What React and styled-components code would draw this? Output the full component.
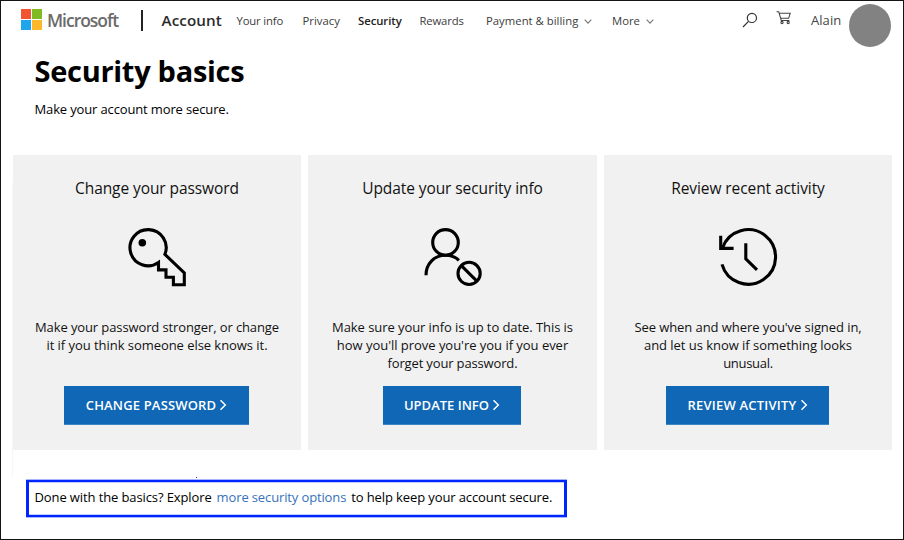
import React from 'react';
import styled, { createGlobalStyle } from 'styled-components';

const GlobalStyle = createGlobalStyle`
  *, *::before, *::after { box-sizing: border-box; }
  body { margin: 0; background: #fff; }
`;

const Page = styled.div`
  width: 904px;
  height: 540px;
  border: 1px solid #141414;
  background: #fff;
  color: #000;
  font-family: 'Open Sans', 'Noto Sans', sans-serif;
  overflow: hidden;
`;

const Header = styled.header`
  display: flex;
  align-items: center;
  height: 37px;
  padding-left: 20px;
`;

const LogoMark = styled.div`
  display: grid;
  grid-template-columns: 10px 10px;
  grid-template-rows: 10px 10px;
  gap: 1px;
  width: 21px;
`;

const LogoTile = styled.span`
  background: ${(p) => p.$color};
`;

const Wordmark = styled.span`
  width: 98.5px;
  padding-left: 5px;
  font-size: 17.5px;
  line-height: 24px;
  font-weight: 600;
  letter-spacing: -1.02px;
  color: #6b6b6b;
`;

const Divider = styled.span`
  width: 2px;
  height: 21px;
  margin-top: 2px;
  background: #222;
`;

const Product = styled.span`
  width: 94px;
  padding-left: 19px;
  margin-top: 1px;
  font-size: 15.2px;
  line-height: 22px;
  font-weight: 600;
  letter-spacing: 0.1px;
  color: #2b2b2b;
  white-space: nowrap;
`;

const Nav = styled.nav`
  display: flex;
  width: 505.5px;
  margin-top: 2px;
`;

const NavItem = styled.a`
  display: flex;
  align-items: center;
  gap: 6px;
  flex: none;
  width: ${(p) => p.$width}px;
  font-size: 11.3px;
  line-height: 18px;
  font-weight: ${(p) => (p.$active ? 600 : 400)};
  letter-spacing: ${(p) => p.$tracking}px;
  color: ${(p) => (p.$active ? '#222' : '#3c3c3c')};
  white-space: nowrap;
`;

const Tools = styled.div`
  display: flex;
  align-items: center;
`;

const CartWrap = styled.span`
  display: flex;
  margin: -3px 0 0 18px;
`;

const UserName = styled.span`
  width: 38px;
  margin-left: 19px;
  font-size: 13px;
  line-height: 20px;
  letter-spacing: 0.05px;
  color: #444;
`;

const Avatar = styled.span`
  width: 42px;
  height: 43px;
  margin-top: 12px;
  border-radius: 50%;
  background: #828282;
`;

const Intro = styled.section`
  height: 117px;
  padding: 12px 0 0 33.5px;
`;

const Title = styled.h1`
  margin: 0;
  font-size: 29px;
  line-height: 42px;
  font-weight: 700;
  letter-spacing: -0.29px;
`;

const Subtitle = styled.p`
  margin: 7px 0 0;
  font-size: 13px;
  line-height: 20px;
  letter-spacing: -0.14px;
`;

const Cards = styled.main`
  position: relative;
  display: grid;
  grid-template-columns: 288px 289px 288px;
  gap: 7px;
  height: 295px;
  padding-left: 12px;
`;

const EdgeLine = styled.span`
  position: absolute;
  left: 11px;
  top: 28px;
  width: 1px;
  height: 294px;
  background: #f7f7f7;
`;

const Card = styled.article`
  display: flex;
  flex-direction: column;
  align-items: center;
  padding-top: 21px;
  background: #f1f1f1;
`;

const CardTitle = styled.h2`
  margin: 0 0 27px;
  font-size: 15.5px;
  line-height: 24px;
  font-weight: 400;
  letter-spacing: -0.08px;
  color: #111;
`;

const CardIcon = styled.svg`
  display: block;
  flex: none;
  width: 60px;
  height: 60px;
  overflow: visible;
  fill: none;
  stroke: #000;
  stroke-width: 3.1;
`;

const Copy = styled.div`
  flex: none;
  height: 68px;
  margin-top: 31px;
  text-align: center;
`;

const CopyLine = styled.div`
  font-size: 13px;
  line-height: 18px;
  letter-spacing: ${(p) => p.$tracking}px;
  color: #111;
  white-space: nowrap;
`;

const Action = styled.button`
  display: flex;
  align-items: center;
  justify-content: center;
  gap: 3px;
  flex: none;
  width: ${(p) => p.$width}px;
  height: 39px;
  margin-right: 1px;
  padding: 0;
  border: 0;
  border-bottom: 1px solid #3d86c6;
  background: #0f67b5;
  color: #fff;
  font: 600 13px/20px 'Open Sans', 'Noto Sans', sans-serif;
  letter-spacing: ${(p) => p.$tracking}px;
  white-space: nowrap;
`;

const Footer = styled.footer`
  position: relative;
  padding: 30px 0 0 25px;
`;

const Speck = styled.span`
  position: absolute;
  left: 195px;
  top: 27px;
  width: 1px;
  height: 1px;
  background: #2a2ad8;
`;

const Callout = styled.div`
  display: flex;
  align-items: center;
  gap: 5px;
  width: 541px;
  height: 37px;
  padding: 0 0 3px 5.5px;
  border: solid #0026ff;
  border-width: 2px 3px;
  box-shadow: 0 -1px #a9b5ff, 0 1px #a9b5ff, inset 0 1px #c4ccff, inset 0 -1px #c4ccff;
  font-size: 13px;
  line-height: 20px;
  letter-spacing: -0.11px;
  white-space: nowrap;
`;

const CalloutLink = styled.a`
  color: #3672bb;
  letter-spacing: -0.13px;
`;

const Chevron = () => (
  <svg width="8" height="6" viewBox="0 0 8 6" fill="none" stroke="#777" strokeWidth="1.1">
    <path d="M.7 1.7 4 5.1 7.3 1.7" />
  </svg>
);

const ActionArrow = () => (
  <svg width="8" height="12" viewBox="0 0 8 12" fill="none" stroke="#fff" strokeWidth="1.5">
    <path d="M1.5 1.2 6.3 6 1.5 10.8" />
  </svg>
);

const SearchIcon = () => (
  <svg width="16" height="16" viewBox="0 0 16 16" fill="none" stroke="#333" strokeWidth="1.2">
    <circle cx="9.9" cy="5.9" r="4.6" />
    <path d="M6.5 9.3 1 15" />
  </svg>
);

const CartIcon = () => (
  <svg width="16" height="16" viewBox="0 0 16 16" fill="none" stroke="#444" strokeWidth="1.1">
    <path d="M.5 1.7h2.2l2.6 8.8h8.1M3.2 3.3h11l-1.6 5H4.7" />
    <circle cx="6" cy="12.5" r="1.1" />
    <circle cx="12.2" cy="12.5" r="1.1" />
  </svg>
);

const KeyIcon = () => (
  <CardIcon viewBox="127 227 60 60">
    <path d="M164.9 254.4A18.1 18.1 0 1 0 158.5 262.5V269.9H166V277.3H173.4V284.7H184.3V272.8Z" />
    <circle cx="142.3" cy="242.7" r="3.8" fill="#000" stroke="none" />
  </CardIcon>
);

const BlockedPersonIcon = () => (
  <CardIcon viewBox="422.5 227 60 60">
    <circle cx="445" cy="242.4" r="12.8" />
    <path d="M425.5 275.2C425.5 263.5 434 255.3 445 255.3C450 255.3 455 257 458.4 260.3" />
    <circle cx="468.6" cy="273.4" r="11.1" />
    <path d="M460.8 265.6 476.4 281.2" />
  </CardIcon>
);

const HistoryIcon = () => (
  <CardIcon viewBox="718 227 60 60">
    <path d="M722 264.4A27.3 27.3 0 1 0 722.6 247.6" />
    <path d="M720.7 235.7V248.4H733.6" />
    <path d="M745.8 243.2V258.9L757 269.8" />
  </CardIcon>
);

const navItems = [
  { label: 'Your info', width: 66, tracking: -0.16 },
  { label: 'Privacy', width: 55.5, tracking: 0.02 },
  { label: 'Security', width: 61.5, tracking: -0.04, active: true },
  { label: 'Rewards', width: 66.5, tracking: -0.16 },
  { label: 'Payment & billing', width: 126, tracking: 0.02, menu: true },
  { label: 'More', width: 60, tracking: 0, menu: true },
];

const cards = [
  {
    title: 'Change your password',
    Icon: KeyIcon,
    lines: [
      ['Make your password stronger, or change', -0.11],
      ['it if you think someone else knows it.', -0.05],
    ],
    action: 'CHANGE PASSWORD',
    width: 185,
    tracking: 0.16,
  },
  {
    title: 'Update your security info',
    Icon: BlockedPersonIcon,
    lines: [
      ['Make sure your info is up to date. This is', -0.07],
      ["how you'll prove you're you if you ever", -0.03],
      ['forget your password.', -0.15],
    ],
    action: 'UPDATE INFO',
    width: 138,
    tracking: 0,
  },
  {
    title: 'Review recent activity',
    Icon: HistoryIcon,
    lines: [
      ["See when and where you've signed in,", -0.07],
      ['and let us know if something looks', -0.04],
      ['unusual.', -0.3],
    ],
    action: 'REVIEW ACTIVITY',
    width: 163,
    tracking: 0.22,
  },
];

export default function App() {
  return (
    <Page>
      <GlobalStyle />
      <Header>
        <LogoMark>
          <LogoTile $color="#f25330" />
          <LogoTile $color="#80bb23" />
          <LogoTile $color="#1ea5ec" />
          <LogoTile $color="#fdb82c" />
        </LogoMark>
        <Wordmark>Microsoft</Wordmark>
        <Divider />
        <Product>Account</Product>
        <Nav>
          {navItems.map((item) => (
            <NavItem key={item.label} $width={item.width} $tracking={item.tracking} $active={item.active}>
              {item.label}
              {item.menu && <Chevron />}
            </NavItem>
          ))}
        </Nav>
        <Tools>
          <SearchIcon />
          <CartWrap>
            <CartIcon />
          </CartWrap>
          <UserName>Alain</UserName>
          <Avatar />
        </Tools>
      </Header>
      <Intro>
        <Title>Security basics</Title>
        <Subtitle>Make your account more secure.</Subtitle>
      </Intro>
      <Cards>
        {cards.map(({ title, Icon, lines, action, width, tracking }) => (
          <Card key={title}>
            <CardTitle>{title}</CardTitle>
            <Icon />
            <Copy>
              {lines.map(([text, spacing]) => (
                <CopyLine key={text} $tracking={spacing}>
                  {text}
                </CopyLine>
              ))}
            </Copy>
            <Action $width={width} $tracking={tracking}>
              {action}
              <ActionArrow />
            </Action>
          </Card>
        ))}
        <EdgeLine />
      </Cards>
      <Footer>
        <Speck />
        <Callout>
          <span>Done with the basics? Explore</span>
          <CalloutLink>more security options</CalloutLink>
          <span>to help keep your account secure.</span>
        </Callout>
      </Footer>
    </Page>
  );
}
